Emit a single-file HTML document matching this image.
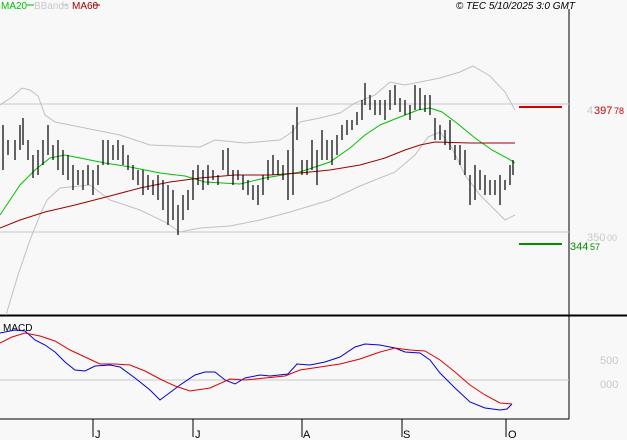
<!DOCTYPE html><html><head><style>body{margin:0;background:#f8f8f8}svg{display:block;font-family:"Liberation Sans",sans-serif}</style></head><body>
<svg width="627" height="440" viewBox="0 0 627 440">
<rect width="627" height="440" fill="#f8f8f8"/>
<text x="1" y="9" font-size="10" fill="#00c000">MA20</text><line x1="27" y1="5" x2="34" y2="5" stroke="#00c000"/>
<text x="34" y="9" font-size="10" fill="#c8c8c8">BBands</text><line x1="62" y1="5" x2="68" y2="5" stroke="#c8c8c8"/>
<text x="72" y="9" font-size="10" fill="#a00000">MA60</text><line x1="93" y1="5" x2="100" y2="5" stroke="#a00000"/>
<text x="575" y="9" font-size="10" font-style="italic" text-anchor="end" fill="#000">© TEC 5/10/2025 3:0 GMT</text>
<line x1="569" y1="9" x2="569" y2="419" stroke="#000"/>
<line x1="0" y1="104" x2="569" y2="104" stroke="#c8c8c8"/>
<line x1="0" y1="232" x2="569" y2="232" stroke="#c8c8c8"/>
<line x1="0" y1="380" x2="569" y2="380" stroke="#c8c8c8"/>
<line x1="0" y1="315.5" x2="627" y2="315.5" stroke="#000" stroke-width="2"/>
<line x1="0" y1="419" x2="569" y2="419" stroke="#000"/>
<g fill="none" stroke="#c0c0c0">
<polyline points="0,105 12,97 22,88 30,90 38,96 45,115 55,122 70,125 95,130 120,135 150,145 175,146 200,147 215,140 245,143 280,140 292,132 300,122 320,118 340,113 355,103 375,95 390,82 405,85 440,78 460,72 473,66 490,76 505,92 515,110"/>
<polyline points="6,315 18,275 30,240 40,215 47,200 60,188 90,185 110,200 140,210 165,222 180,232 200,228 230,226 260,220 290,212 330,200 360,186 395,172 415,155 428,137 440,132 452,148 465,175 480,195 495,210 505,220 515,215"/>
</g>
<polyline fill="none" stroke="#00c000" points="0,215 10,200 20,185 35,170 50,158 65,155 90,160 105,163 130,167 160,173 185,176 205,182 240,184 265,178 300,172 330,162 350,148 365,135 380,125 400,117 418,110 430,108 442,112 458,124 475,138 492,150 507,158 515,163"/>
<polyline fill="none" stroke="#a00000" points="0,228 20,220 45,212 75,205 110,196 140,188 170,182 200,178 235,175 270,175 300,173 330,170 360,165 385,158 405,150 420,145 435,142 470,143 515,143"/>
<path stroke="#000" stroke-width="1.2" fill="none" d="M3,125V170 M8,140V155 M15,140V160 M20,125V150 M23,118V145 M28,140V160 M33,155V178 M38,150V175 M43,140V165 M48,125V155 M53,145V160 M58,140V170 M63,150V175 M68,155V180 M73,165V190 M78,170V185 M83,170V190 M88,165V185 M93,170V195 M98,165V185 M103,140V165 M108,140V165 M113,145V160 M118,140V160 M123,145V165 M128,155V170 M133,165V180 M138,170V185 M143,170V195 M148,175V190 M153,180V195 M158,175V200 M163,180V210 M168,185V225 M173,190V220 M178,205V235 M183,195V220 M188,190V210 M193,170V200 M198,165V185 M203,170V190 M208,165V185 M213,170V180 M218,175V185 M223,150V170 M228,148V175 M233,170V185 M238,170V180 M243,175V190 M248,180V195 M253,185V200 M258,185V205 M263,175V195 M268,160V180 M273,155V175 M278,160V175 M283,165V180 M288,150V200 M293,125V195 M297,107V140 M302,160V175 M307,160V175 M312,140V170 M317,150V185 M322,130V160 M327,140V160 M332,140V165 M337,135V155 M342,125V140 M347,120V135 M352,120V130 M357,112V125 M362,100V120 M365,83V105 M370,95V110 M375,100V115 M380,100V115 M385,100V120 M390,90V110 M395,85V105 M400,98V112 M405,100V115 M410,105V120 M415,85V110 M420,88V110 M425,95V112 M430,95V115 M435,118V140 M440,125V140 M445,130V145 M450,120V150 M455,145V160 M460,145V165 M465,150V175 M470,175V205 M475,165V200 M480,170V190 M485,175V195 M490,180V195 M495,180V195 M500,175V205 M505,180V190 M510,165V185 M513,160V175"/>
<line x1="519" y1="107" x2="562" y2="107" stroke="#d00000" stroke-width="2"/>
<line x1="519" y1="244" x2="562" y2="244" stroke="#009000" stroke-width="2"/>
<text x="587" y="114" font-size="11" fill="#c8c8c8">4</text>
<text x="594" y="114" font-size="11" fill="#d00000">397</text><text x="614" y="114" font-size="9" fill="#d00000">78</text>
<text x="587" y="241" font-size="11" fill="#c8c8c8">350</text><text x="607" y="241" font-size="9" fill="#c8c8c8">00</text>
<text x="570" y="250" font-size="11" fill="#009000">344</text><text x="590" y="250" font-size="9" fill="#009000">57</text>
<text x="600" y="364" font-size="11" fill="#c8c8c8">500</text>
<text x="600" y="388" font-size="11" fill="#c8c8c8">000</text>
<text x="3" y="331" font-size="10" fill="#000">MACD</text>
<polyline fill="none" stroke="#0000e0" points="0,333 15,330 25,331 35,340 45,345 55,352 65,362 75,370 85,371 95,366 110,365 120,367 135,378 150,390 160,400 168,394 180,385 195,375 205,372 215,372 225,380 235,384 245,378 260,375 270,376 288,374 297,364 310,365 325,362 340,357 355,347 365,344 380,345 395,348 405,352 420,353 430,360 440,373 455,388 470,402 485,408 500,410 507,409 512,404"/>
<polyline fill="none" stroke="#e00000" points="0,343 12,337 25,333 40,336 55,341 70,350 85,357 100,364 115,364 130,365 145,371 160,379 175,386 190,391 210,388 230,379 245,380 265,378 285,376 300,370 320,367 340,364 360,359 380,352 395,348 410,350 425,351 440,360 455,372 470,385 485,395 500,403 512,404"/>
<g stroke="#000"><line x1="93" y1="419" x2="93" y2="437"/><line x1="193" y1="419" x2="193" y2="437"/><line x1="302" y1="419" x2="302" y2="437"/><line x1="402" y1="419" x2="402" y2="437"/><line x1="506" y1="419" x2="506" y2="437"/></g>
<g font-size="11" fill="#000"><text x="95" y="438">J</text><text x="195" y="438">J</text><text x="303" y="438">A</text><text x="403" y="438">S</text><text x="508" y="438">O</text></g>
</svg></body></html>
